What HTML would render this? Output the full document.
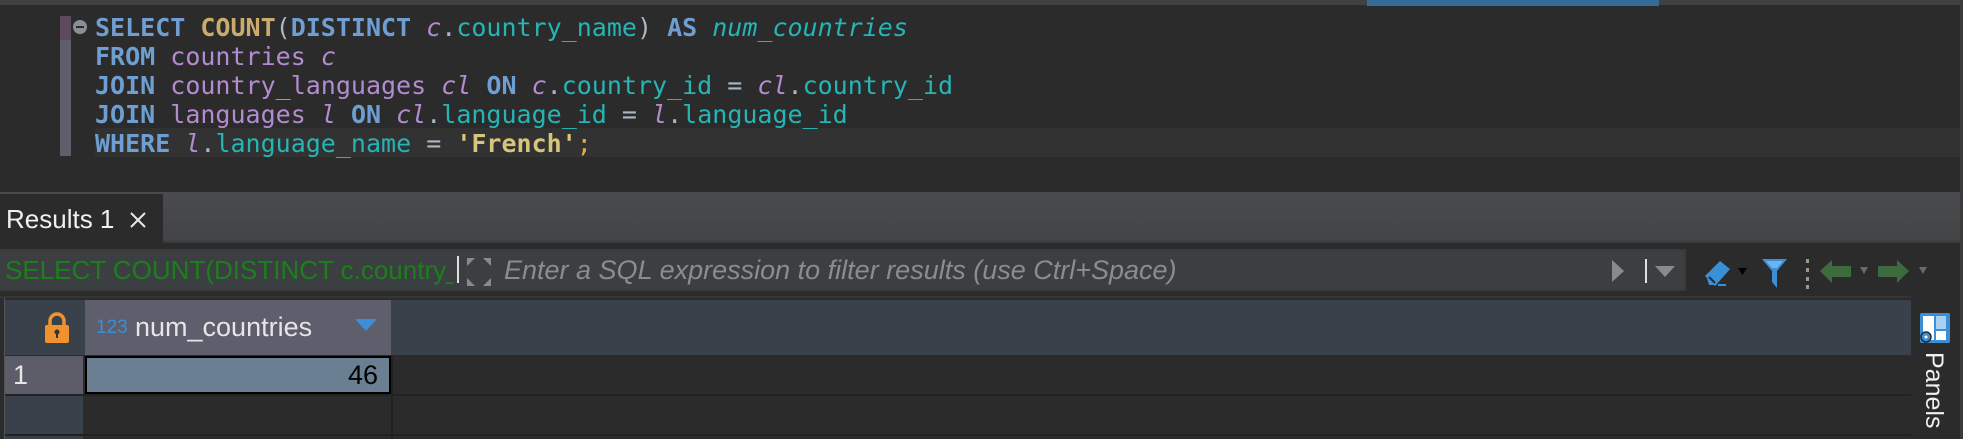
<!DOCTYPE html>
<html><head><meta charset="utf-8"><style>
*{margin:0;padding:0;box-sizing:border-box}
body{width:1963px;height:439px;background:#2b2b2b;position:relative;overflow:hidden;font-family:"Liberation Sans",sans-serif}
.abs{position:absolute}
.code{position:absolute;left:95px;font-family:"DejaVu Sans Mono","Liberation Mono",monospace;font-size:25px;line-height:29px;white-space:pre;color:#a9b7c6}
.k{color:#6f9fd2;font-weight:bold}
.f{color:#c9ac6c;font-weight:bold}
.t{color:#26b5b5}
.p{color:#b38bd0}
.pi{color:#b38bd0;font-style:italic}
.ti{color:#26b5b5;font-style:italic}
.s{color:#d6c57a;font-weight:bold}
.g{color:#a9b7c6}
</style></head><body>
<div class="abs" style="left:0;top:0;width:1963px;height:5px;background:#414143"></div>
<div class="abs" style="left:1367px;top:0;width:292px;height:6px;background:#366a98"></div>
<div class="abs" style="left:60px;top:16px;width:11px;height:24px;background:#5e4a5e"></div>
<div class="abs" style="left:60px;top:40px;width:11px;height:116px;background:#5f5f6b"></div>
<div class="abs" style="left:73px;top:20px;width:14px;height:14px;border-radius:50%;background:#8a8f96"></div>
<div class="abs" style="left:76px;top:26px;width:8px;height:2px;background:#2b2b2b"></div>
<div class="abs" style="left:95px;top:128px;width:1868px;height:29px;background:#323232"></div>
<div class="code" style="top:13px"><span class="k">SELECT</span> <span class="f">COUNT</span><span class="g">(</span><span class="k">DISTINCT</span> <span class="pi">c</span><span class="g">.</span><span class="t">country_name</span><span class="g">)</span> <span class="k">AS</span> <span class="ti">num_countries</span>
<span class="k">FROM</span> <span class="p">countries</span> <span class="pi">c</span>
<span class="k">JOIN</span> <span class="p">country_languages</span> <span class="pi">cl</span> <span class="k">ON</span> <span class="pi">c</span><span class="g">.</span><span class="t">country_id</span> <span class="g">=</span> <span class="pi">cl</span><span class="g">.</span><span class="t">country_id</span>
<span class="k">JOIN</span> <span class="p">languages</span> <span class="pi">l</span> <span class="k">ON</span> <span class="pi">cl</span><span class="g">.</span><span class="t">language_id</span> <span class="g">=</span> <span class="pi">l</span><span class="g">.</span><span class="t">language_id</span>
<span class="k">WHERE</span> <span class="pi">l</span><span class="g">.</span><span class="t">language_name</span> <span class="g">=</span> <span class="s">'French'</span><span style="color:#e0b040">;</span></div>
<div class="abs" style="left:0;top:192px;width:1960px;height:51px;background:linear-gradient(#4a4b4e,#434446);border-bottom:2px solid #3a3b3d"></div>
<div class="abs" style="left:0;top:194px;width:163px;height:50px;background:#2b2b2b"></div>
<div class="abs" style="left:6px;top:204px;color:#f0f0f0;font-size:26px;line-height:30px">Results 1</div>
<svg class="abs" style="left:128px;top:210px" width="20" height="20"><path d="M3 3L17 17M17 3L3 17" stroke="#e8e8e8" stroke-width="2"/></svg>
<div class="abs" style="left:0;top:249px;width:1686px;height:42px;background:#3c3f41;border:2px solid #3a3a3a;border-left:none"></div>
<div class="abs" style="left:5px;top:255px;width:448px;overflow:hidden;white-space:nowrap;color:#1c7f1c;font-size:26px;line-height:30px">SELECT COUNT(DISTINCT c.country_name) AS num_countries</div>
<div class="abs" style="left:457px;top:256px;width:2px;height:27px;background:#e0e0e0"></div>
<svg class="abs" style="left:466px;top:257px" width="26" height="30"><g fill="#8a8a8a"><path d="M1 1h8l-8 8z"/><path d="M25 1h-8l8 8z"/><path d="M1 29h8l-8-8z"/><path d="M25 29h-8l8-8z"/></g></svg>
<div class="abs" style="left:504px;top:254px;color:#8c8c8c;font-size:27px;line-height:32px;font-style:italic;white-space:nowrap">Enter a SQL expression to filter results (use Ctrl+Space)</div>
<svg class="abs" style="left:1610px;top:256px" width="70" height="30"><path d="M2 4L14 15L2 26z" fill="#8a8a8a"/><rect x="35" y="3" width="2" height="24" fill="#e0e0e0"/><path d="M45 10h20l-10 11z" fill="#8a8a8a"/></svg>
<svg class="abs" style="left:1700px;top:255px" width="230" height="36">
<path d="M6 20L20 6L30 14L16 30L9 30Z" fill="#3b8fd6"/><path d="M6 20L16 30" stroke="#3b8fd6" stroke-width="3"/><path d="M9 22l6 6" stroke="#2b2b2b" stroke-width="2"/>
<rect x="18" y="29" width="8" height="2" fill="#3b8fd6"/>
<path d="M38 13h9l-4.5 7z" fill="#000"/>
<path d="M62 4h25l-10 12v17l-5-6v-11z" fill="#3b8fd6"/><path d="M66 6h17l-6 7h-5z" fill="#6cb4ea"/>
<rect x="106" y="4" width="3" height="4" fill="#9a9a8a"/><rect x="106" y="13" width="3" height="4" fill="#9a9a8a"/><rect x="106" y="22" width="3" height="4" fill="#9a9a8a"/><rect x="106" y="30" width="3" height="4" fill="#9a9a8a"/>
<path d="M120 16L132 5v6h19v11h-19v6z" fill="#3d6b3d"/>
<path d="M160 12h8l-4 7z" fill="#6a6a6a"/>
<path d="M209 16L197 5v6h-19v11h19v6z" fill="#3d6b3d"/>
<path d="M219 12h8l-4 7z" fill="#6a6a6a"/>
</svg>
<div class="abs" style="left:0;top:296px;width:1911px;height:2px;background:#353535"></div>
<div class="abs" style="left:0;top:298px;width:5px;height:141px;background:#2b2b2b;border-right:1px solid #555"></div>
<div class="abs" style="left:5px;top:300px;width:1906px;height:55px;background:#39414a"></div>
<div class="abs" style="left:85px;top:300px;width:306px;height:55px;background:#5e5e6c"></div>
<svg class="abs" style="left:44px;top:312px" width="26" height="32"><path d="M6 14V9a7 7 0 0 1 14 0v5" stroke="#f0922e" stroke-width="3.5" fill="none"/><rect x="1" y="13" width="24" height="18" rx="2" fill="#f0922e"/><circle cx="13" cy="20" r="2.5" fill="#333"/><rect x="12" y="21" width="2" height="5" fill="#333"/></svg>
<div class="abs" style="left:96px;top:318px;color:#3b8fd6;font-size:19px;line-height:20px">123</div>
<div class="abs" style="left:135px;top:311px;color:#e6e6e6;font-size:27px;line-height:32px">num_countries</div>
<svg class="abs" style="left:354px;top:318px" width="24" height="14"><path d="M1 1h22l-11 12z" fill="#3b8fd6"/></svg>
<div class="abs" style="left:5px;top:356px;width:78px;height:38px;background:#5d5d69"></div>
<div class="abs" style="left:13px;top:358px;color:#e6e6e6;font-size:27px;line-height:34px">1</div>
<div class="abs" style="left:85px;top:356px;width:306px;height:38px;background:#6b7f92;border:2px solid #000"></div>
<div class="abs" style="left:290px;top:358px;width:88px;text-align:right;color:#000;font-size:27px;line-height:34px">46</div>
<div class="abs" style="left:5px;top:394px;width:1906px;height:2px;background:#222"></div>
<div class="abs" style="left:5px;top:396px;width:78px;height:38px;background:#39414a"></div>
<div class="abs" style="left:391px;top:356px;width:2px;height:83px;background:#222"></div>
<div class="abs" style="left:5px;top:434px;width:1906px;height:2px;background:#222"></div>
<div class="abs" style="left:5px;top:436px;width:78px;height:3px;background:#39414a"></div>
<div class="abs" style="left:1911px;top:290px;width:49px;height:149px;background:#2b2b2b"></div>
<div class="abs" style="left:1960px;top:0;width:3px;height:439px;background:#3a3a3a"></div>
<svg class="abs" style="left:1919px;top:312px" width="32" height="32"><rect x="1" y="1" width="30" height="30" rx="2" fill="#3b8fd6"/><rect x="4" y="4" width="11" height="24" fill="#fff"/><rect x="17" y="4" width="10" height="13" fill="#a8d0f0"/><rect x="17" y="19" width="10" height="9" fill="#fff"/><circle cx="7" cy="25" r="5" fill="#3b8fd6" stroke="#2b2b2b" stroke-width="1.5"/><circle cx="7" cy="25" r="1.5" fill="#fff"/></svg>
<div class="abs" style="left:1921px;top:352px;width:26px;height:84px;"><div style="transform:rotate(90deg);transform-origin:0 0;position:absolute;left:26px;top:0;color:#f0f0f0;font-size:25px;line-height:26px;white-space:nowrap">Panels</div></div>
</body></html>
